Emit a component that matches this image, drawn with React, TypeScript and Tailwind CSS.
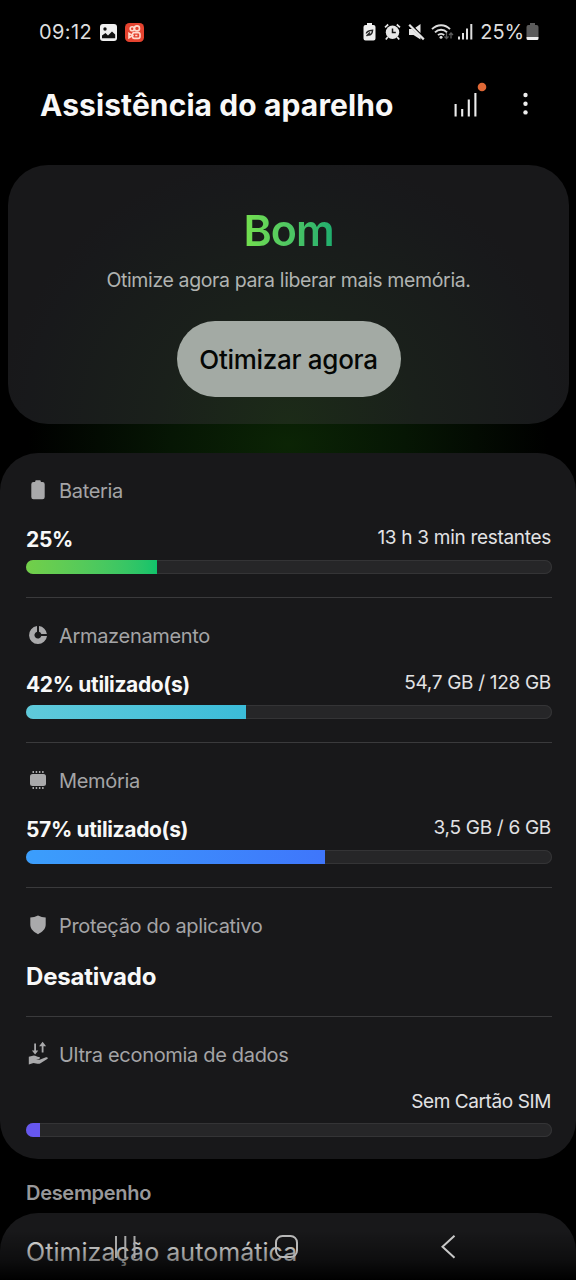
import type { ReactNode } from "react";

const BatteryIcon = () => (
  <svg width="24" height="24" viewBox="0 0 24 24" fill="#a9a9ab">
    <path d="M9.200 3.200a1 1 0 0 1 1-1h3.600a1 1 0 0 1 1 1v.8H16.500a2.200 2.200 0 0 1 2.200 2.200V19a2.200 2.200 0 0 1-2.200 2.200h-9A2.200 2.200 0 0 1 5.300 19V6.200A2.200 2.200 0 0 1 7.500 4h1.700z" />
  </svg>
);

const StorageIcon = () => (
  <svg width="24" height="24" viewBox="0 0 24 24" fill="#a9a9ab">
    <path d="M11 3.100v5.600a3.500 3.500 0 1 0 4.300 4.300H21A9 9 0 1 1 11 3.100z" />
    <path d="M13 3.100A9 9 0 0 1 20.900 11h-5.600A3.500 3.500 0 0 0 13 8.700z" />
  </svg>
);

const MemoryIcon = () => (
  <svg width="24" height="24" viewBox="0 0 24 24" fill="#a9a9ab">
    <rect x="4" y="6" width="16" height="12" rx="2.500" />
    <path d="M6.500 3h1.500v2h-1.500zM9.700 3h1.500v2h-1.500zM12.900 3h1.500v2h-1.500zM16.100 3h1.500v2h-1.500zM6.500 19h1.500v2h-1.500zM9.700 19h1.500v2h-1.500zM12.900 19h1.500v2h-1.500zM16.100 19h1.500v2h-1.500z" />
  </svg>
);

const ShieldIcon = () => (
  <svg width="24" height="24" viewBox="0 0 24 24" fill="#a9a9ab">
    <path d="M12 2.500c2.500 1.300 5 1.900 7.700 2v7.300c0 4.500-3.700 7.300-7.700 9.400-4-2.100-7.700-4.900-7.700-9.400V4.500c2.700-.1 5.200-.7 7.700-2z" />
  </svg>
);

const DataSaverIcon = () => (
  <svg width="24" height="26" viewBox="0 0 24 26" fill="#a9a9ab">
    <path d="M8.200 2.500h1.800v7h2.300l-3.200 4-3.200-4h2.300z" />
    <path d="M15.700 11.500V5.200h-2.600L16.600.7l3.500 4.500h-2.600v6.300z" />
    <path d="M2.800 15.800l5-1.300c2 0 3.200 1.500 5 1.500 1.600 0 1.600 1.700.2 1.900l-3 .4 3.500.4 6.500-2.500c1.800-.4 2.500 1 1.200 1.900l-6.700 4.200c-2 1.200-4.500 0-7-.3l-4.700 1.500z" />
  </svg>
);

function Label({ icon, text }: { icon: ReactNode; text: string }) {
  return (
    <div className="flex h-[26px] items-center gap-[9px] text-[20px] tracking-[-0.32px] text-[#a4a4a6]">
      <span className="flex w-6 justify-center">{icon}</span>
      <span className="pt-[2px]">{text}</span>
    </div>
  );
}

function Meter({ percent, fill }: { percent: number; fill: string }) {
  return (
    <div className="mt-[7px] flex h-[14px] overflow-hidden rounded-full bg-[#262628] shadow-[inset_0_0_0_1px_#343436]">
      <div className={"h-full " + fill} style={{ width: percent + "%" }} />
    </div>
  );
}

const usage = [
  {
    icon: <BatteryIcon />,
    title: "Bateria",
    value: "25%",
    detail: "13 h 3 min restantes",
    percent: 24.9,
    fill: "bg-linear-to-r from-[#72cf49] to-[#0fc36b]",
  },
  {
    icon: <StorageIcon />,
    title: "Armazenamento",
    value: "42% utilizado(s)",
    detail: "54,7 GB / 128 GB",
    percent: 41.9,
    fill: "bg-linear-to-r from-[#5fcadb] to-[#3bbcd9]",
  },
  {
    icon: <MemoryIcon />,
    title: "Memória",
    value: "57% utilizado(s)",
    detail: "3,5 GB / 6 GB",
    percent: 56.9,
    fill: "bg-linear-to-r from-[#3b9efc] to-[#3f76fb]",
  },
];

function StatusBar() {
  return (
    <div className="flex h-[64px] shrink-0 items-center justify-between pl-[39px] pr-[37px] text-[20px] text-[#dedede]">
      <div className="flex items-center gap-[8px]">
        <span className="tracking-[0.4px]">09:12</span>
        <svg width="17" height="17" viewBox="0 0 17 17">
          <rect width="17" height="17" rx="3" fill="#f0f0f0" />
          <path d="M2 11.500l3.500-2.500 2.500 2.500L12 7.500l3.200 3v3.700H2z" fill="#111" />
          <circle cx="5" cy="5" r="1.700" fill="#111" />
        </svg>
        <svg width="19" height="19" viewBox="0 0 19 19" fill="none">
          <rect width="19" height="19" rx="4.500" fill="#e5432f" />
          <g stroke="#ffd9cc" strokeWidth="1.600">
            <circle cx="7.200" cy="5.800" r="2" />
            <circle cx="12" cy="5.400" r="2.500" />
            <rect x="7.500" y="9.600" width="7.500" height="5.800" rx="1.800" />
            <path d="M7.500 12.500L4 10.500v4.300zM10.200 12.500h2.200" />
          </g>
        </svg>
      </div>

      <div className="flex items-center">
        <svg width="13" height="18" viewBox="0 0 13 18">
          <path d="M4 0h5v2h1.500a2 2 0 0 1 2 2v11.500a2 2 0 0 1-2 2h-8a2 2 0 0 1-2-2V4a2 2 0 0 1 2-2H4z" fill="#eee" />
          <path d="M3.300 10.500c.3-2.300 3-3 6.300-3.300-.2 3.300-2 5.300-4.600 4.700M3.500 13l3.500-3.500" stroke="#222" strokeWidth="1.400" fill="none" />
        </svg>
        <svg className="ml-[8px]" width="17" height="18" viewBox="0 0 17 18" fill="none">
          <circle cx="8.500" cy="9.200" r="6.700" fill="#e6e6e6" />
          <path d="M8.500 5.500v4h3.300" stroke="#111" strokeWidth="1.500" />
          <path d="M1 4.300L4.200 1.500M16 4.300l-3.200-2.800M3.800 14l-2 2.500M13.200 14l2 2.500" stroke="#e6e6e6" strokeWidth="1.700" />
        </svg>
        <svg className="ml-[7px]" width="17" height="18" viewBox="0 0 17 18" fill="#e6e6e6">
          <path d="M1 6h3.200l8.300 8v2.500L5.500 12H1z" />
          <path d="M7.300 4.700L12.500 1v9z" />
          <path d="M1.200 1.800l14.600 14.600" stroke="#e6e6e6" strokeWidth="2.200" />
        </svg>
        <svg className="ml-[6px]" width="23" height="18" viewBox="0 0 23 18" fill="none" stroke="#dedede" strokeWidth="1.900">
          <path d="M1 6.200c5.200-5.300 13-5.300 18 0M4 9.300c3.300-3.400 8.800-3.400 12 0M7 12.200c1.700-1.700 4.500-1.700 6.200 0" />
          <circle cx="10" cy="14.200" r="1.500" fill="#dedede" stroke="none" />
          <path d="M15.500 10v5.500m-2-2l2 2 2-2M20 15.500V10m-2 2l2-2 2 2" stroke="#5c5c5c" strokeWidth="1.300" />
        </svg>
        <svg className="ml-[3px]" width="17" height="18" viewBox="0 0 17 18" fill="#dedede">
          <rect x="1" y="13.500" width="2" height="3" />
          <rect x="5" y="10" width="2" height="6.500" />
          <rect x="9" y="5.500" width="2" height="11" />
          <rect x="13.300" y="1" width="2" height="15.500" />
        </svg>
        <span className="ml-[6px] tracking-[-0.1px]">25%</span>
        <svg className="ml-[2px]" width="13" height="18" viewBox="0 0 13 18">
          <path d="M4 0h5v2h1.500a2 2 0 0 1 2 2v10.500H.5V4a2 2 0 0 1 2-2H4z" fill="#5b5b5b" />
          <path d="M.5 14h12v1.500a1.500 1.500 0 0 1-1.500 1.500H2a1.500 1.500 0 0 1-1.500-1.500z" fill="#efefef" />
        </svg>
      </div>
    </div>
  );
}

export default function App() {
  return (
    <div className="relative flex h-[1280px] w-[576px] flex-col overflow-hidden bg-black font-['Inter','Liberation_Sans',sans-serif]">
      <StatusBar />

      {/* Title bar */}
      <div className="flex h-[101px] shrink-0 items-start justify-between pl-[40px] pr-[45px] pt-[18px]">
        <h1 className="text-[30px] font-bold leading-[46px] tracking-[0.1px] text-[#f8f8f8]">Assistência do aparelho</h1>
        <div className="flex">
          <svg width="34" height="38" viewBox="0 0 34 38">
            <path d="M2.600 22v12.500M9.200 27v7.500M15.800 17.500v17M22.400 11v23.500" stroke="#ededed" strokeWidth="2.100" />
            <circle cx="29" cy="5" r="4.300" fill="#df6836" />
          </svg>
          <svg className="ml-[32px]" width="12" height="38" viewBox="0 0 12 38" fill="#ededed">
            <circle cx="6.500" cy="13" r="2.200" />
            <circle cx="6.500" cy="21.700" r="2.200" />
            <circle cx="6.500" cy="30.400" r="2.200" />
          </svg>
        </div>
      </div>

      {/* Overall status, with the green glow that leaks below the card */}
      <div className="h-[288px] shrink-0 bg-[radial-gradient(ellipse_260px_170px_at_50%_97%,#0b2405_0%,#061604_45%,#000_100%)] px-[8px] pb-[29px]">
        <div className="mr-[-1px] flex h-[259px] flex-col items-center rounded-[40px] bg-[#18181a] bg-[radial-gradient(ellipse_290px_270px_at_50%_100%,#1c2b18_0%,#1a201b_45%,#18191b_90%,#18181a_100%)]">
          <div className="mt-[38px] bg-linear-to-r from-[#74e04d] to-[#1cad6e] bg-clip-text text-[43px] font-semibold leading-[54px] tracking-[-1px] text-transparent">
            Bom
          </div>
          <p className="mt-[10px] text-[19.500px] leading-[26px] tracking-[-0.37px] text-[#b0b3b1]">Otimize agora para liberar mais memória.</p>
          <button className="mt-[28px] h-[76px] w-[224px] rounded-full bg-[#a3aaa4] text-[26px] font-medium tracking-[-0.3px] text-[#050705]">
            Otimizar agora
          </button>
        </div>
      </div>

      <div className="h-[706px] shrink-0 rounded-[38px] bg-[#18181a] px-[26px]">
        {usage.map((item) => (
          <div key={item.title} className="mr-[-2px] border-b border-[#3a3a3c] pt-[24px] pb-[23px]">
            <Label icon={item.icon} text={item.title} />
            <div className="mt-[22px] flex h-[28px] justify-between">
              <span className="text-[21px] font-bold leading-[30px] tracking-[-0.35px] text-[#f8f8f8]">{item.value}</span>
              <span className="pr-px text-[19px] leading-[26px] tracking-[-0.3px] text-[#e2e2e4]">{item.detail}</span>
            </div>
            <Meter percent={item.percent} fill={item.fill} />
          </div>
        ))}

        <div className="mr-[-2px] border-b border-[#3a3a3c] pt-[24px] pb-[22px]">
          <Label icon={<ShieldIcon />} text="Proteção do aplicativo" />
          <div className="mt-[22px] text-[24px] font-bold leading-[34px] tracking-[-0.2px] text-[#f8f8f8]">Desativado</div>
        </div>

        <div className="mr-[-2px] pt-[24px]">
          <Label icon={<DataSaverIcon />} text="Ultra economia de dados" />
          <div className="mt-[22px] h-[27px] pr-px text-right text-[19px] leading-[26px] tracking-[-0.4px] text-[#e2e2e4]">Sem Cartão SIM</div>
          <Meter percent={2.7} fill="bg-[#6657ee]" />
        </div>
      </div>

      <h2 className="h-[54px] shrink-0 pl-[26px] pt-[20px] text-[20px] font-semibold leading-[28px] tracking-[-0.3px] text-[#98989a]">Desempenho</h2>
      <div className="h-[100px] shrink-0 rounded-t-[38px] bg-[#18181a] pl-[26px] pt-[22px] text-[25px] leading-[34px] tracking-[0.05px] text-[#f8f8f8]">
        Otimização automática
      </div>

      {/* System navigation over the page */}
      <div className="absolute inset-x-0 bottom-0 flex h-[66px] items-start bg-linear-to-b from-transparent from-25% via-black/45 via-70% to-black to-100% pt-[20px]">
        <svg className="ml-[112px]" width="26" height="26" viewBox="0 0 26 26" stroke="#a8a8a8" strokeWidth="2">
          <path d="M4 2v22M13.300 2v22M22.500 2v22" />
        </svg>
        <svg className="ml-[136px]" width="26" height="26" viewBox="0 0 26 26" fill="none" stroke="#b8b8b8" strokeWidth="2">
          <rect x="2" y="2" width="21" height="21" rx="6.500" />
        </svg>
        <svg className="ml-[137px]" width="26" height="26" viewBox="0 0 26 26" fill="none" stroke="#c8c8c8" strokeWidth="2">
          <path d="M17.500 1.800L5.500 12.800l12 11" />
        </svg>
      </div>
    </div>
  );
}
